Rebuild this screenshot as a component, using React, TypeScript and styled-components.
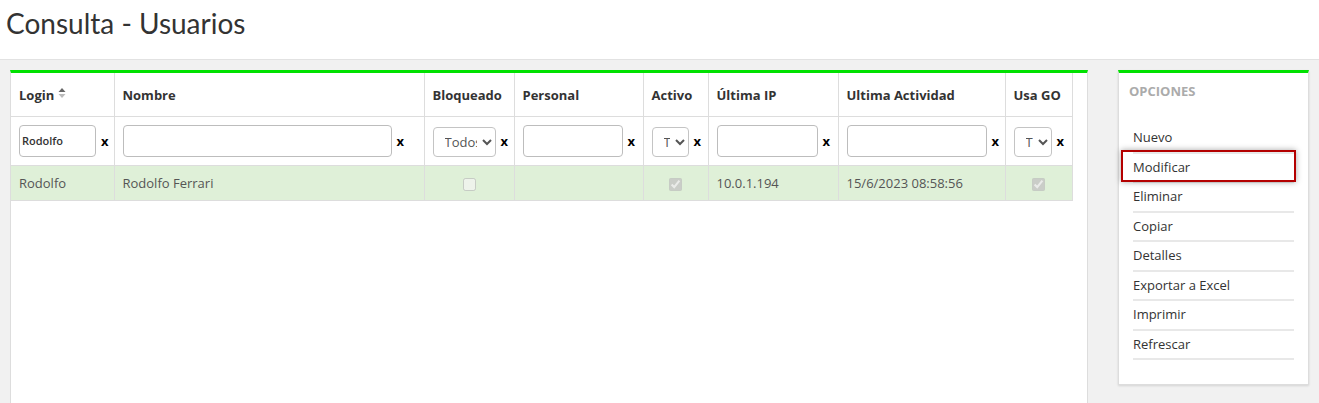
import React from 'react'
import styled, { createGlobalStyle } from 'styled-components'

const GlobalStyle = createGlobalStyle`
  html, body {
    margin: 0;
    padding: 0;
    background: #f1f1f1;
    font-family: "Open Sans", "Liberation Sans", sans-serif;
    color: #333;
  }
`

const Green = '#00e100'
const Line = '#dddddd'

interface Column {
  title: string
  width: number
  filter: 'text' | 'select' | 'none'
  inputWidth?: number
  filterValue?: string
  sortable?: boolean
}

const columns: Column[] = [
  { title: 'Login', width: 103, filter: 'text', inputWidth: 77, filterValue: 'Rodolfo', sortable: true },
  { title: 'Nombre', width: 310, filter: 'text', inputWidth: 269 },
  { title: 'Bloqueado', width: 90, filter: 'select', inputWidth: 63 },
  { title: 'Personal', width: 129, filter: 'text', inputWidth: 100 },
  { title: 'Activo', width: 65, filter: 'select', inputWidth: 37 },
  { title: 'Última IP', width: 130, filter: 'text', inputWidth: 101 },
  { title: 'Ultima Actividad', width: 167, filter: 'text', inputWidth: 140 },
  { title: 'Usa GO', width: 67, filter: 'select', inputWidth: 38 },
]

const options = ['Nuevo', 'Modificar', 'Eliminar', 'Copiar', 'Detalles', 'Exportar a Excel', 'Imprimir', 'Refrescar']

const SortIcon = () => (
  <svg width="8" height="12" viewBox="0 0 8 12" style={{ marginLeft: 4, verticalAlign: '1px' }}>
    <path d="M0.5 5 L4 1 L7.5 5 Z" fill="#666" />
    <path d="M0.5 7 L4 11 L7.5 7 Z" fill="#bbb" />
  </svg>
)

const App = () => (
  <>
    <GlobalStyle />
    <PageHeader>
      <Title>Consulta - Usuarios</Title>
    </PageHeader>
    <Content>
      <MainPanel>
        <Grid>
          <colgroup>
            {columns.map((c) => (
              <col key={c.title} style={{ width: c.width }} />
            ))}
          </colgroup>
          <thead>
            <HeadRow>
              {columns.map((c) => (
                <HeadCell key={c.title}>
                  {c.title}
                  {c.sortable && <SortIcon />}
                </HeadCell>
              ))}
            </HeadRow>
            <FilterRow>
              {columns.map((c) => (
                <FilterCell key={c.title}>
                  <FilterWrap>
                    {c.filter === 'text' && (
                      <FilterInput $w={c.inputWidth ?? 80} defaultValue={c.filterValue ?? ''} />
                    )}
                    {c.filter === 'select' && (
                      <FilterSelect $w={c.inputWidth ?? 60} defaultValue="Todos">
                        <option>Todos</option>
                        <option>Sí</option>
                        <option>No</option>
                      </FilterSelect>
                    )}
                    <Clear>x</Clear>
                  </FilterWrap>
                </FilterCell>
              ))}
            </FilterRow>
          </thead>
          <tbody>
            <DataRow>
              <DataCell>Rodolfo</DataCell>
              <DataCell>Rodolfo Ferrari</DataCell>
              <DataCell $center>
                <Check type="checkbox" disabled />
              </DataCell>
              <DataCell />
              <DataCell $center>
                <Check type="checkbox" disabled defaultChecked />
              </DataCell>
              <DataCell>10.0.1.194</DataCell>
              <DataCell>15/6/2023 08:58:56</DataCell>
              <DataCell $center>
                <Check type="checkbox" disabled defaultChecked />
              </DataCell>
            </DataRow>
          </tbody>
        </Grid>
      </MainPanel>
      <SidePanel>
        <SideTitle>Opciones</SideTitle>
        <Menu>
          {options.map((o) => (
            <MenuItem key={o}>
              {o}
              {o === 'Modificar' && <Highlight />}
            </MenuItem>
          ))}
        </Menu>
      </SidePanel>
    </Content>
  </>
)

export default App

const PageHeader = styled.header`
  background: #fff;
  height: 60px;
  border-bottom: 1px solid #e2e2e2;
  padding: 7px 0 0 6px;
  box-sizing: border-box;
`

const Title = styled.h1`
  margin: 0;
  font-family: Lato, "Liberation Sans", sans-serif;
  font-weight: 400;
  font-size: 28px;
  line-height: 1.2;
  color: #333;
`

const Content = styled.div`
  display: flex;
  align-items: flex-start;
  gap: 30px;
  padding: 10px 10px 0 10px;
`

const MainPanel = styled.section`
  width: 1078px;
  height: 340px;
  box-sizing: border-box;
  background: #fff;
  border: 1px solid ${Line};
  border-top: 3px solid ${Green};
  padding-right: 15px;
`

const Grid = styled.table`
  border-collapse: collapse;
  table-layout: fixed;
  width: 1061px;
  font-size: 13px;
`

const HeadRow = styled.tr`
  height: 43px;
`

const HeadCell = styled.th`
  text-align: left;
  font-weight: 700;
  color: #333;
  padding: 1px 8px 0;
  border: 1px solid ${Line};
  border-top: none;
  white-space: nowrap;
  &:first-child {
    border-left: none;
  }
`

const FilterRow = styled.tr`
  height: 49px;
`

const FilterCell = styled.td`
  padding: 0 0 0 8px;
  border: 1px solid ${Line};
  &:first-child {
    border-left: none;
  }
`

const FilterWrap = styled.div`
  display: flex;
  align-items: center;
`

const FilterInput = styled.input<{ $w: number }>`
  width: ${(p) => p.$w}px;
  height: 32px;
  box-sizing: border-box;
  border: 1px solid #bdbdbd;
  border-radius: 4px;
  padding: 0 2px;
  font-family: "Open Sans", "Liberation Sans", sans-serif;
  font-size: 11px;
  font-weight: 600;
  color: #333;
  outline: none;
`

const FilterSelect = styled.select<{ $w: number }>`
  width: ${(p) => p.$w}px;
  height: 30px;
  margin-top: 2px;
  box-sizing: border-box;
  border: 1px solid #c4c4c4;
  border-radius: 4px;
  padding: 0 2px 0 7px;
  background: #fff;
  font-family: "Open Sans", "Liberation Sans", sans-serif;
  font-size: 13px;
  color: #555;
`

const Clear = styled.span`
  margin-left: 5px;
  font-weight: 700;
  font-size: 13px;
  color: #000;
  cursor: pointer;
`

const DataRow = styled.tr`
  height: 35px;
  background: #dff0d8;
`

const DataCell = styled.td<{ $center?: boolean }>`
  padding: 0 8px;
  color: #555;
  text-align: ${(p) => (p.$center ? 'center' : 'left')};
  border: 1px solid ${Line};
  &:first-child {
    border-left: none;
  }
`

const Check = styled.input`
  margin: 0;
  width: 13px;
  height: 13px;
  vertical-align: middle;
`

const SidePanel = styled.aside`
  width: 191px;
  box-sizing: border-box;
  background: #fff;
  border: 1px solid ${Line};
  border-top: 3px solid ${Green};
  box-shadow: 0 1px 2px rgba(0, 0, 0, 0.12);
  padding: 9px 14px 25px 10px;
`

const SideTitle = styled.h3`
  margin: 0;
  font-size: 13px;
  line-height: 18px;
  font-weight: 700;
  text-transform: uppercase;
  color: #ababab;
`

const Menu = styled.ul`
  list-style: none;
  margin: 23px 0 0 4px;
  padding: 0;
`

const MenuItem = styled.li`
  position: relative;
  font-size: 13px;
  line-height: 18.5px;
  padding: 5px 0;
  color: #333;
  border-bottom: 2px solid #e8e8e8;
  height: 18.5px;
  box-sizing: content-box;
  margin-bottom: -1px;
`

const Highlight = styled.span`
  position: absolute;
  left: -12px;
  right: -2px;
  top: -3px;
  bottom: -1px;
  border: 2px solid #b40000;
  box-shadow: 0 0 6px rgba(0, 0, 0, 0.35);
  pointer-events: none;
`
